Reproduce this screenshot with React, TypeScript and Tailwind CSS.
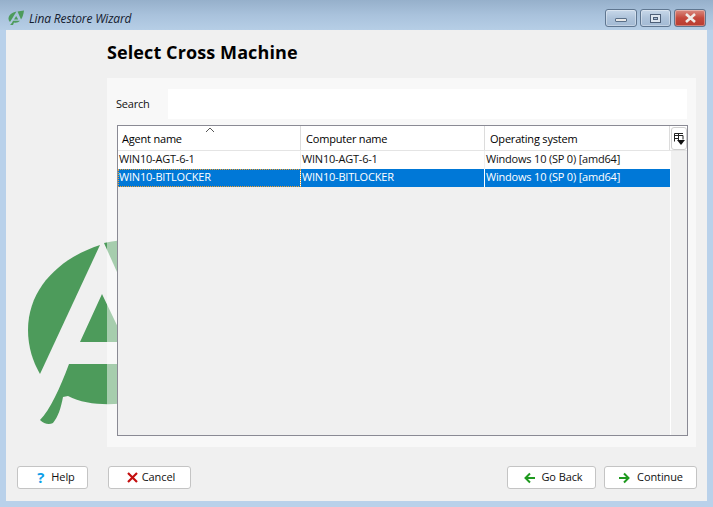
const font = "font-['Open_Sans',sans-serif]";

function Logo() {
  return (
    <svg className="absolute left-0 top-[30px]" width="130" height="400" viewBox="0 30 130 400" fill="#4d9b5b">
      <path d="M100 245 C60 258 28 288 28 330 C28 347 33 362 40 374 Z" />
      <path d="M104 243 C112 241 122 240 130 240 L130 300 L117 272 Z" />
      <path d="M102 294 L80 342 L130 342 L125 342 Z" />
      <path d="M69 364 L130 364 L130 402 C112 406 85 405 68 396 L63 397 C61 408 58 417 53 423 C49 425 44 424 40 420 C50 410 60 388 69 364 Z" />
    </svg>
  );
}

function WinButton({ w, red, children }: { w: string; red?: boolean; children: React.ReactNode }) {
  return (
    <div
      className={`${w} h-[18px] flex items-center justify-center rounded-[3px] border border-[#5f7690] shadow-[inset_0_0_0_1px_rgba(255,255,255,0.35)] ${
        red ? 'bg-gradient-to-b from-[#d98a80] via-[#c4483c] to-[#b83c30]' : 'bg-gradient-to-b from-[#c8d8ea] via-[#aec3da] to-[#a3bad4]'
      }`}
    >
      {children}
    </div>
  );
}

function Button({ w, icon, label, className = '' }: { w: string; icon: React.ReactNode; label: string; className?: string }) {
  return (
    <div className={`${w} ${className} h-[23px] flex items-center justify-center bg-white border border-[#c4c4c4] rounded-[3px] text-[11px] tracking-[-0.1px] text-[#111]`}>
      {icon}
      <span>{label}</span>
    </div>
  );
}

const ArrowLeft = (
  <svg width="12" height="12" viewBox="0 0 12 12" fill="none" stroke="#1f9a1f" strokeWidth="2">
    <path d="M11 6H2M6 1.5L1.5 6L6 10.5" />
  </svg>
);
const ArrowRight = (
  <svg width="12" height="12" viewBox="0 0 12 12" fill="none" stroke="#1f9a1f" strokeWidth="2">
    <path d="M1 6h9M6 1.5L10.5 6L6 10.5" />
  </svg>
);
const CrossRed = (
  <svg width="11" height="11" viewBox="0 0 11 11" fill="none" stroke="#c40f0f" strokeWidth="2.2">
    <path d="M1 1l9 9M10 1l-9 9" />
  </svg>
);

const rows = [
  ['WIN10-AGT-6-1', 'WIN10-AGT-6-1', 'Windows 10 (SP 0) [amd64]'],
  ['WIN10-BITLOCKER', 'WIN10-BITLOCKER', 'Windows 10 (SP 0) [amd64]'],
];

export default function App() {
  return (
    <div className={`${font} relative w-[713px] h-[507px] overflow-hidden flex flex-col bg-[#b9d1ea]`}>
      {/* title bar */}
      <div className="h-[30px] shrink-0 flex items-start pl-[8px] pr-[7px] bg-gradient-to-b from-[#96b0cb] via-[#a9c2dc] to-[#b6cee6]">
        <svg className="mt-[10px]" width="16" height="16" viewBox="0 0 16 15" fill="#4d9b5b">
          <path d="M8.5 1 C4 2 0.5 4.5 0.5 8 C0.5 9.5 1 10.5 2 11.5 Z" />
          <path d="M9.5 1 L16 0 C15.5 4 14.5 7 13 9 Z" />
          <path d="M8.2 5.5 L6 9 L10.2 9 Z" />
          <path d="M5 10.3 L12 10.3 C10.5 12 8 12.7 6 12 L5 14.5 L2 14.5 C3.5 13 4.3 12 5 10.3 Z" />
        </svg>
        <span className="ml-[5px] mt-[11px] text-[12px] leading-[16px] italic tracking-[-0.15px] text-[#14202f]">Lina Restore Wizard</span>
        <div className="ml-auto mt-[9px] flex gap-[3px]">
          <WinButton w="w-[32px]">
            <div className="w-[12px] h-[4px] bg-[#e8e8e8] border border-[#5a6f88] rounded-[1px] mt-[3px]" />
          </WinButton>
          <WinButton w="w-[31px]">
            <div className="w-[11px] h-[9px] bg-[#dde6f0] border border-[#4d5f78] flex items-center justify-center">
              <div className="w-[5px] h-[3px] bg-[#a7bdd6] border border-[#4d5f78]" />
            </div>
          </WinButton>
          <WinButton w="w-[32px]" red>
            <svg width="13" height="10" viewBox="0 0 13 10" fill="none" stroke="#f0ece8" strokeWidth="2.6">
              <path d="M2 1l9 8M11 1l-9 8" />
            </svg>
          </WinButton>
        </div>
      </div>

      {/* client area */}
      <div className="relative mx-[6px] mb-[6px] flex-1 bg-[#f0f0f0]" />
      <Logo />

      <div className="absolute left-[107px] top-[32px]">
        <h1 className="text-[18px] leading-[40px] font-bold text-black tracking-[0.1px]">Select Cross Machine</h1>
      </div>

      {/* panel */}
      <div className="absolute left-[107px] top-[78px] w-[589px] h-[369px] bg-white/50 px-[9px] pt-[11px] text-[11px] tracking-[-0.2px]">
        <div className="flex items-center h-[30px]">
          <span className="w-[52px] text-[#111]">Search</span>
          <div className="w-[520px] h-[30px] bg-white" />
        </div>
        <div className="relative mt-[6px] ml-px w-[571px] h-[311px] border border-[#8a8a94] bg-[#f0f0f0]">
          <div className="flex h-[25px] bg-white border-b border-[#e4e4e4]">
            <div className="relative w-[183px] pl-[4px] pt-[5px] border-r border-[#dcdcdc]">
              Agent name
              <svg className="absolute left-[87px] top-[1px]" width="10" height="6" viewBox="0 0 10 6" fill="none" stroke="#555" strokeWidth="1">
                <path d="M1 5l4-4 4 4" />
              </svg>
            </div>
            <div className="w-[184px] pl-[5px] pt-[5px] border-r border-[#dcdcdc]">Computer name</div>
            <div className="w-[185px] pl-[5px] pt-[5px] border-r border-[#dcdcdc]">Operating system</div>
          </div>
          {rows.map((row, i) => (
            <div key={i} className={`flex h-[18px] w-[552px] leading-[16px] ${i === 1 ? 'bg-[#0078d7] text-white' : 'bg-white text-[#111]'}`}>
              <div className={`w-[183px] h-full pl-px border-r ${i === 1 ? 'border-white outline-1 -outline-offset-1 outline-dotted outline-[#f0a030]' : 'border-[#f0f0f0]'}`}>{row[0]}</div>
              <div className={`w-[184px] h-full pl-px border-r ${i === 1 ? 'border-white' : 'border-[#f0f0f0]'}`}>{row[1]}</div>
              <div className="w-[185px] h-full pl-px">{row[2]}</div>
            </div>
          ))}
          {/* white line at the end of the columns */}
          <div className="absolute left-[552px] top-[25px] bottom-0 w-px bg-white" />
          {/* column chooser */}
          <div className="absolute left-[553px] top-px w-[16px] h-[23px] bg-white border border-[#d0d0d0] rounded-[3px] flex items-center justify-center">
            <svg width="12" height="13" viewBox="0 0 12 13" fill="none" stroke="#222" strokeWidth="1">
              <path d="M1.5 9.5v-8.0h8.5M1.5 3.5h8.5v4M1.5 6.5h4M5.5 1.5v7" />
              <path d="M4 8h8L8 13z" fill="#111" stroke="none" />
            </svg>
          </div>
        </div>
      </div>

      {/* footer buttons */}
      <div className="absolute left-[17px] top-[466px] w-[680px] flex">
        <Button w="w-[71px]" className="gap-[7px] pl-[7px]" label="Help" icon={<span className="text-[15px] leading-none font-bold text-[#0d9ee8]">?</span>} />
        <Button w="w-[83px]" className="ml-[20px] gap-[4px] pl-[3px]" label="Cancel" icon={CrossRed} />
        <Button w="w-[89px]" className="ml-auto gap-[5px] pl-[4px]" label="Go Back" icon={ArrowLeft} />
        <Button w="w-[93px]" className="ml-[8px] gap-[7px]" label="Continue" icon={ArrowRight} />
      </div>
    </div>
  );
}
